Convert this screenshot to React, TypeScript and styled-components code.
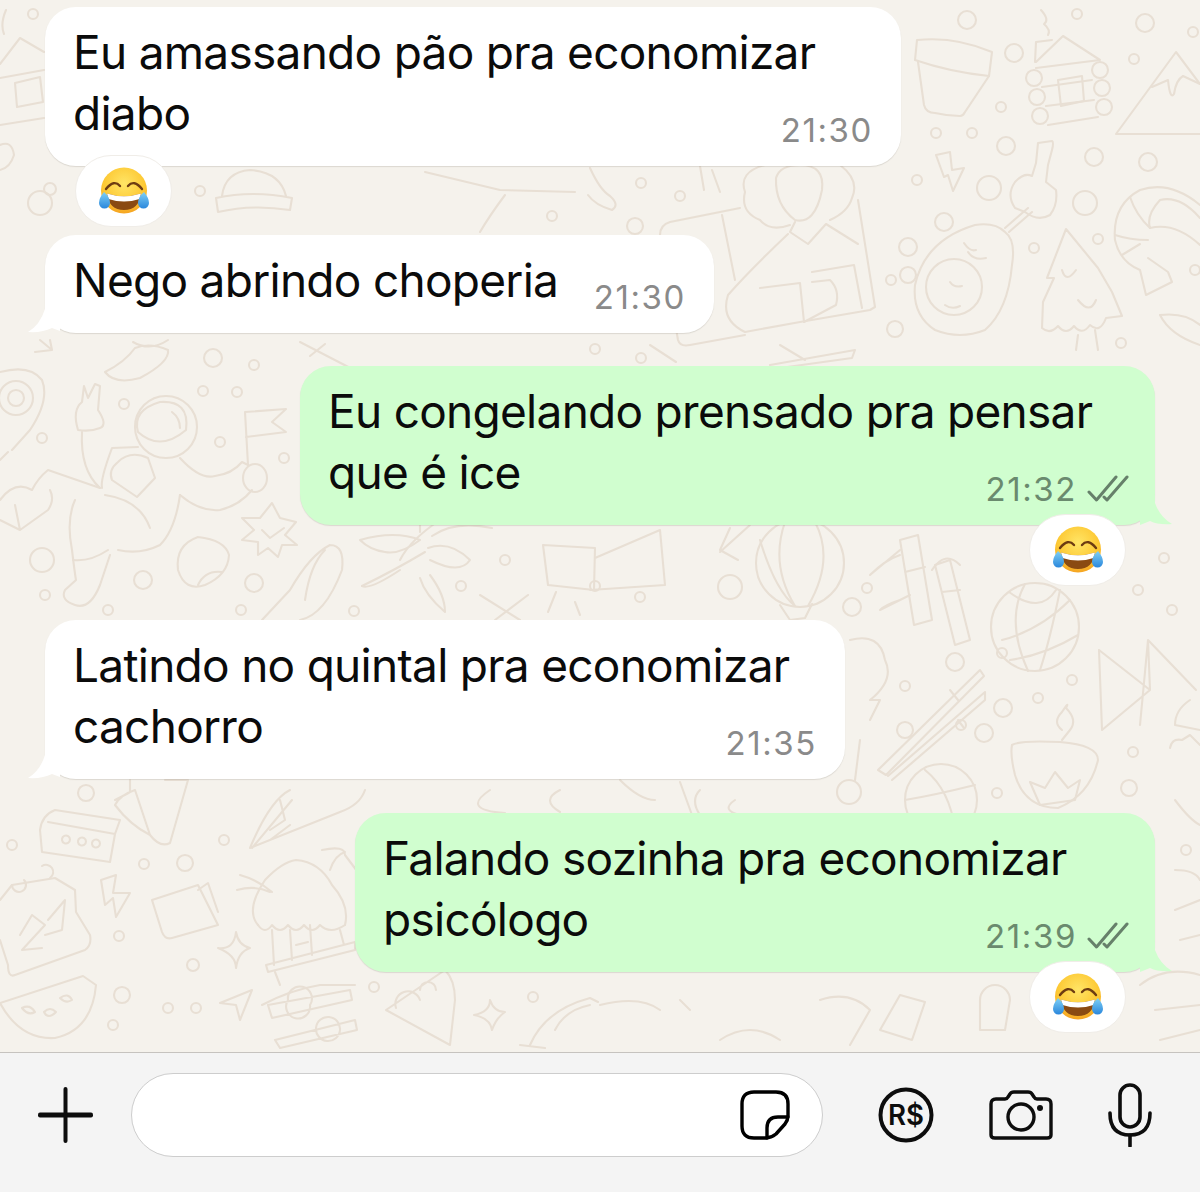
import React from 'react'
import styled, { createGlobalStyle } from 'styled-components'

const GlobalStyle = createGlobalStyle`
  html, body {
    margin: 0;
    padding: 0;
    background: #f4f4f4;
    font-family: Inter, 'Liberation Sans', sans-serif;
  }
`

const Page = styled.div`
  width: 1200px;
  height: 1192px;
  display: flex;
  flex-direction: column;
  overflow: hidden;
`

const Chat = styled.main`
  position: relative;
  height: 1052px;
  box-sizing: border-box;
  padding: 7px 45px 0;
  display: flex;
  flex-direction: column;
  background: #f5f2ec;
  overflow: hidden;
`

const DoodleLayer = styled.svg`
  position: absolute;
  inset: 0;
  fill: none;
  stroke: #e8dfd4;
  stroke-width: 2.1;
  stroke-linecap: round;
  stroke-linejoin: round;
`

const Group = styled.section<{ $out?: boolean; $after: number }>`
  position: relative;
  display: flex;
  flex-direction: column;
  align-items: ${({ $out }) => ($out ? 'flex-end' : 'flex-start')};
  margin-bottom: ${({ $after }) => $after}px;
`

const Bubble = styled.div<{ $out?: boolean; $width: number }>`
  position: relative;
  width: ${({ $width }) => $width}px;
  box-sizing: border-box;
  padding: 14.5px 30px 22.5px 28px;
  display: grid;
  border-radius: 31px;
  background: ${({ $out }) => ($out ? '#d0fecf' : '#ffffff')};
  box-shadow: 0 1px 1px rgba(90, 80, 70, 0.16);
`

const Message = styled.p`
  grid-area: 1 / 1;
  margin: 0;
  font-size: 46px;
  line-height: 61px;
  letter-spacing: -0.72px;
  color: #0b0b0b;
  white-space: nowrap;
`

const Meta = styled.div<{ $out?: boolean }>`
  grid-area: 1 / 1;
  justify-self: end;
  align-self: end;
  display: flex;
  align-items: center;
  gap: 10px;
  height: 32px;
  margin-bottom: -2px;
  margin-right: ${({ $out }) => ($out ? '-4px' : '-2px')};
  font-size: 33px;
  letter-spacing: 1.6px;
  color: ${({ $out }) => ($out ? '#6a8a6e' : '#8a8a8a')};
`

const Tail = styled.svg<{ $out?: boolean }>`
  position: absolute;
  bottom: 0;
  ${({ $out }) => ($out ? 'right: -17px;' : 'left: -17px;')}
  fill: ${({ $out }) => ($out ? '#d0fecf' : '#ffffff')};
`

const Reaction = styled.div<{ $out?: boolean }>`
  position: relative;
  width: 97px;
  height: 72px;
  box-sizing: border-box;
  margin-top: -11px;
  ${({ $out }) => ($out ? 'margin-right: 29px;' : 'margin-left: 30px;')}
  display: flex;
  align-items: center;
  justify-content: center;
  border-radius: 36px;
  background: #ffffff;
  border: 1px solid #f0ede8;
`

const Footer = styled.footer`
  flex: 1;
  box-sizing: border-box;
  padding: 20px 48px 0 38px;
  border-top: 1px solid #c6c3bf;
  background: #f4f4f4;
  display: flex;
  align-items: flex-start;
`

const ToolSlot = styled.div<{ $before?: number }>`
  height: 84px;
  display: flex;
  align-items: center;
  margin-left: ${({ $before }) => $before ?? 0}px;
  color: #0d0d0d;
`

const InputBox = styled.div`
  width: 692px;
  height: 84px;
  box-sizing: border-box;
  margin-left: 38px;
  padding-right: 32px;
  display: flex;
  align-items: center;
  justify-content: flex-end;
  border: 1px solid #cdcdcd;
  border-radius: 42px;
  background: #ffffff;
`

const CIRCLES: [number, number, number][] = [
  [967, 20, 9], [1077, 14, 5], [1145, 23, 9], [1193, 32, 5], [1014, 53, 9], [1134, 59, 5],
  [1001, 107, 5], [936, 133, 5], [972, 133, 5], [1006, 146, 9], [1094, 157, 9], [1148, 162, 9],
  [917, 180, 5], [989, 188, 12], [1085, 203, 12], [944, 222, 9], [1034, 248, 5], [1098, 239, 5],
  [908, 247, 9], [1121, 343, 5], [1195, 270, 5], [33, 14, 5],
  [1034, 78, 8], [1100, 70, 8], [1037, 97, 8], [1102, 88, 8], [1040, 116, 8], [1104, 107, 8],
  [50, 189, 6], [200, 191, 5], [40, 203, 12], [641, 183, 5], [680, 196, 5], [552, 216, 5],
  [635, 226, 8], [908, 275, 8], [891, 280, 5], [895, 329, 8], [595, 349, 5], [641, 358, 5],
  [213, 358, 9], [254, 365, 5], [203, 391, 5], [237, 392, 5], [124, 404, 5], [42, 438, 5],
  [220, 442, 5], [284, 458, 5], [42, 560, 12], [143, 580, 9], [254, 583, 9], [45, 595, 5],
  [108, 610, 5], [241, 610, 5], [354, 611, 5], [505, 560, 5], [461, 586, 5], [595, 586, 5],
  [640, 597, 5], [730, 587, 12], [852, 607, 9], [867, 588, 5], [1164, 558, 5], [1138, 590, 5],
  [1105, 525, 8], [1172, 610, 5], [905, 730, 8], [955, 662, 9], [905, 686, 5], [1002, 653, 5],
  [1072, 680, 5], [1038, 698, 5], [1003, 708, 9], [961, 725, 5], [984, 733, 9], [1133, 752, 5],
  [997, 793, 5], [1129, 788, 8], [849, 792, 12], [12, 845, 5], [86, 793, 8],
  [224, 840, 5], [144, 864, 5], [185, 863, 8], [119, 936, 5], [193, 965, 6], [122, 995, 8],
  [168, 1008, 5], [196, 1008, 5], [113, 1025, 5], [374, 987, 5], [533, 997, 5], [1090, 870, 9],
  [1000, 850, 5], [1186, 850, 5],
]

const PATHS: string[] = [
  // cabin cut by the left edge
  'M0 64 L20 38 L44 52 M0 78 L44 70 M0 125 L44 118 M15 83 L40 77 L43 102 L17 107 Z',
  'M6 10 Q0 24 4 34 M0 145 Q12 140 14 155 Q10 168 0 170',
  // pot, cabin, mountain (top right)
  'M917 40 Q955 36 992 52 L989 76 Q950 72 915 60 Z',
  'M918 62 L924 105 Q926 113 935 113 Q948 116 960 116 Q963 116 965 112 L989 76',
  'M1036 62 L1063 36 L1100 60 L1036 68 M1035 62 L1036 42 L1052 40',
  'M1041 10 Q1050 20 1044 24 Q1051 30 1048 35',
  'M1042 87 L1092 80 M1046 106 L1094 100 M1048 125 L1098 117',
  'M1058 80 L1082 76 L1084 101 L1061 106 Z',
  'M1116 134 L1176 52 L1200 84 M1116 134 L1200 134',
  'M1152 87 L1168 80 Q1170 100 1174 94 Q1176 80 1183 76 L1200 84',
  // lightning, key, avocado, tree, shrimp
  'M936 155 L950 152 L952 170 L964 168 L953 191 L948 175 L944 177 Z',
  'M1038 143 L1052 141 Q1054 142 1052 150 L1048 165 L1046 182 L1056 190 Q1058 205 1050 215 Q1038 222 1025 212 L1015 208 Q1006 195 1015 182 Q1024 172 1032 176 L1036 163 Z',
  'M1028 208 L1005 228 M1032 212 L1009 232',
  'M1005 232 Q1016 240 1012 265 Q1008 310 985 330 Q960 340 935 330 Q912 315 915 285 Q925 240 975 225 Q995 222 1005 232',
  'M982 287 A28 28 0 1 1 926 287 A28 28 0 1 1 982 287',
  'M964 243 Q970 252 976 250 M968 252 Q974 261 986 258 M950 282 Q954 288 962 286 M945 305 Q952 310 960 306',
  'M1066 229 L1047 278 L1054 278 L1043 302 L1042 328 Q1050 335 1058 326 Q1066 336 1074 326 Q1082 336 1090 325 Q1100 334 1106 318 L1122 316 L1112 292 L1098 268 Z',
  'M1078 335 L1076 350 M1095 330 L1098 350 M1076 270 Q1066 284 1062 270 M1078 300 Q1090 315 1096 300',
  'M1200 205 Q1170 180 1140 190 Q1112 205 1115 240 Q1120 262 1140 270 L1146 295 L1172 282 L1168 272 L1148 258',
  'M1200 218 Q1180 195 1160 200 Q1146 215 1150 228 Q1175 222 1200 245',
  'M1130 197 Q1136 215 1150 228 M1115 235 Q1130 240 1148 240 M1122 255 L1140 244',
  'M1160 315 Q1185 312 1200 325 M1160 315 Q1170 335 1200 345',
  // woman with notebook
  'M765 165 Q738 172 745 192 Q740 212 760 220 Q770 232 790 225 M840 165 Q860 180 852 198 Q848 212 830 220',
  'M776 178 Q775 205 795 220 Q815 225 822 190 Q825 165 800 165 Q780 165 776 178',
  'M795 222 L790 232 L808 244 L826 224 L858 244',
  'M788 234 Q750 270 728 295 Q720 320 745 332 L800 322 L870 310 L875 307 L858 200',
  'M740 208 L670 222 Q660 225 660 235 L678 340 Q680 347 690 345 L745 335',
  'M722 215 L735 280 M760 288 L800 283 L804 322 M812 272 L854 265 L862 308',
  'M812 282 L830 280 Q840 290 836 305 L804 322',
  'M650 345 L676 362 M780 345 L805 360 M770 365 L855 350 L852 358 L780 368',
  // hat and misc under first bubble
  'M222 196 Q225 172 250 170 Q280 172 286 196 M216 198 Q252 190 292 198 L290 210 Q252 204 218 212 Z',
  'M425 172 L500 190 L575 192 M505 195 Q490 215 480 232 M590 168 Q600 190 610 196 Q620 205 612 210 Q595 205 588 195',
  'M700 166 L704 190 M712 170 L720 192',
  // left edge, below bubble 2
  'M40 340 L52 350 M35 352 L52 350 L50 340',
  'M105 372 Q125 362 135 348 Q150 342 168 350 Q170 362 140 378 Q115 385 105 372',
  'M133 342 Q150 352 168 340',
  'M300 342 L358 372 M310 356 L325 344',
  // astronaut
  'M197 427 A31 31 0 1 1 135 427 A31 31 0 1 1 197 427',
  'M138 432 Q160 452 186 430 Q190 400 160 402 Q132 410 138 432',
  'M172 412 Q180 418 180 428',
  'M138 447 L112 448 Q100 480 102 488 M82 432 Q80 470 100 488',
  'M78 430 Q72 410 82 402 L84 386 L88 398 L95 384 L100 386 L98 410 Q108 425 100 428 Q90 432 78 430',
  'M148 458 Q130 450 118 462 Q108 470 112 480 L137 497 L155 478 Z',
  'M180 458 Q200 480 215 476 Q232 474 242 462 L248 465 M180 495 Q200 512 220 510 Q240 505 252 490',
  'M180 495 Q175 530 160 545 Q140 555 118 550 M105 495 Q140 500 150 528',
  'M75 500 Q66 520 72 550 Q75 575 76 580 L65 590 Q60 600 75 605 Q90 610 100 585 L110 555',
  'M73 560 Q90 562 108 550 M100 488 L48 470 Q38 478 32 490 Q15 480 0 500 M50 490 Q55 500 48 510 L20 530 M0 520 L20 530 L15 505',
  'M245 412 L286 409 L272 422 L286 432 L246 437 M245 412 L248 465',
  'M267 478 A12 14 0 1 1 243 478 A12 14 0 1 1 267 478',
  // rocket disc left
  'M0 372 Q30 364 42 380 Q50 400 30 430 L12 450 M0 460 L8 452',
  'M33 398 A17 17 0 1 1 -1 398 A17 17 0 1 1 33 398 M24 398 A8 8 0 1 1 8 398 A8 8 0 1 1 24 398',
  // star, blob, surfboard, leaves, flower
  'M272 503 L280 518 L296 522 L285 535 L297 545 L282 545 L278 557 L268 548 L258 555 L258 542 L242 540 L254 530 L242 518 L260 518 Z',
  'M262 530 L270 538 L284 528',
  'M198 537 Q225 540 229 555 Q228 575 205 585 Q185 592 178 570 Q175 545 198 537 M198 585 Q205 570 222 572',
  'M330 545 Q345 545 342 570 Q325 615 300 620 M330 545 Q310 555 290 590 L262 620 M325 550 Q310 565 305 600',
  'M360 540 Q395 530 420 540 Q400 555 385 552 Q370 550 360 540 M362 586 Q395 570 425 552',
  'M400 560 Q410 540 440 520 M430 560 Q460 575 470 560 Q450 540 428 548 M430 575 Q445 595 445 612 Q425 595 420 578 M400 570 Q370 590 362 586',
  'M432 536 Q455 520 492 528 M420 532 L420 520',
  // box and pieces in the middle
  'M543 545 L595 548 L594 590 L548 585 Z M595 558 L660 530 L665 585 L590 590',
  'M480 595 L520 620 M495 620 L528 595 M548 612 L556 592 M575 602 L580 615',
  'M730 528 L720 550 L738 560 M750 525 L720 552',
  // beach ball
  'M844 563 A44 44 0 1 1 756 563 A44 44 0 1 1 844 563',
  'M785 522 Q770 565 795 606 M815 522 Q835 560 808 606 M760 540 Q775 590 795 606',
  'M780 605 L790 620 L805 618 L812 604',
  // bamboo
  'M900 540 L918 535 L932 620 L914 625 Z M905 572 L925 567',
  'M935 565 L950 560 L970 640 L955 645 Z M942 592 L960 590',
  'M900 555 Q885 560 870 575 L900 550 M932 570 Q945 550 960 565 M900 600 Q885 605 880 610 L910 595',
  // globe
  'M1079 627 A44 44 0 1 1 991 627 A44 44 0 1 1 1079 627',
  'M1009 592 Q1040 615 1056 590 M1002 640 Q1040 630 1070 600 M1010 660 Q1045 655 1078 635 M1025 584 Q1005 620 1028 671 M1060 590 Q1050 640 1040 670',
  // planet triangle, chopsticks, lamp
  'M1099 650 L1102 730 L1150 690 L1099 650 M1150 690 L1148 640 L1196 690 M1148 640 L1140 725',
  'M1190 700 Q1175 710 1175 725 L1200 730',
  'M878 770 L980 670 L984 676 L886 775 Z M950 690 L958 700 M888 776 L985 692 L985 700 L892 780 M958 720 L964 728',
  'M1012 745 Q1020 740 1060 742 Q1098 745 1098 760 Q1090 795 1058 808 Q1025 808 1015 775 Q1010 755 1012 745',
  'M1062 730 Q1052 722 1062 712 Q1070 700 1066 708 Q1078 720 1070 730 L1062 740',
  'M1030 782 L1045 788 L1055 772 L1068 788 L1080 780 L1075 800 L1040 805 Z',
  'M1170 748 Q1172 738 1182 740 L1190 735 L1200 745 M1175 800 Q1190 820 1200 825',
  // basketball under the lamp
  'M977 800 A36 36 0 1 0 905 800 A36 36 0 1 0 977 800 M925 770 Q950 790 955 830 M905 800 Q935 795 975 785',
  // leftover right bubble area
  'M850 640 Q880 632 885 660 Q895 680 870 700 L880 700 L870 720 M860 740 L855 780',
  'M620 780 Q640 800 655 800 M680 782 L692 815 M700 790 Q690 800 700 815 M735 800 Q720 810 740 815',
  'M490 790 Q460 810 505 813 M560 790 Q540 800 560 812',
  // bottom left
  'M48 822 L115 834 L120 820 L55 810 Q42 815 40 830 L42 852 L110 862 L115 834',
  'M62 840 A4 4 0 1 0 62 839 M78 842 A4 4 0 1 0 78 841 M92 844 A4 4 0 1 0 92 843',
  'M115 800 Q125 795 130 792 L130 780 M165 780 L188 780 L170 843 Q160 848 150 835 L135 790 Q120 795 115 805 Q130 825 150 835',
  'M252 848 L292 800 M290 790 Q270 800 250 848 L340 812 Q360 805 365 790 M280 800 L285 820 L270 830 M290 825 L270 840',
  'M0 900 L12 885 L55 878 L75 890 L76 912 L90 935 Q92 945 85 950 L15 975 Q8 978 8 965 L0 940',
  'M12 885 A7 7 0 1 0 24 880 M50 878 A7 7 0 1 0 42 866',
  'M20 935 L32 915 L45 925 L22 950 L42 948 M48 920 L65 900 L62 930 L45 935',
  'M101 880 L116 875 L113 893 L130 893 L116 917 L113 898 L105 905 Z',
  'M152 900 L198 885 L218 925 L172 938 Q165 940 162 932 Z M198 890 L208 883 L218 912',
  'M237 890 Q255 885 270 892 M240 875 Q258 880 272 892',
  'M258 925 Q245 910 265 880 Q282 862 296 860 Q320 862 332 885 Q350 905 345 925',
  'M258 925 Q265 935 272 925 Q280 935 288 925 Q296 935 304 925 Q312 935 320 925 Q330 935 345 925',
  'M266 965 L355 942 L355 950 L268 972 Z M272 930 L274 965 M340 930 L344 945 M290 930 L292 960 M310 925 L312 955 M296 945 L308 942',
  'M275 972 L280 985 M262 1005 Q290 990 320 985 L355 985',
  'M322 850 Q345 845 345 855 L360 875 M330 870 Q335 855 345 852',
  'M236 932 Q234 950 218 948 Q236 955 236 968 Q238 952 250 948 Q238 945 236 932',
  'M0 1003 L83 976 L96 985 Q92 1030 55 1038 Q20 1040 0 1003',
  'M22 1008 Q28 1016 35 1012 Q30 1004 22 1008 M44 1012 Q48 1020 56 1012 Q50 1006 44 1012 M60 998 Q66 1004 72 1000 Q68 992 60 998',
  'M220 1003 L252 990 L240 1020 L236 1005 Z',
  'M268 1005 L350 990 L352 1000 L272 1018 Z M310 1005 A12 12 0 1 0 288 1000 A12 12 0 1 0 310 1005',
  'M275 1040 L355 1020 L357 1030 L280 1048 Z M340 1030 A12 12 0 1 0 316 1028 A12 12 0 1 0 340 1030',
  'M386 1010 L445 970 Q455 980 455 1000 L450 1045 Z M420 1000 A12 12 0 1 0 396 1008 M436 990 A8 8 0 1 0 420 990',
  'M490 1000 Q490 1012 474 1015 Q490 1018 492 1030 Q496 1018 505 1012 Q494 1012 490 1000',
  'M530 1045 Q545 1010 590 998 L598 1002 M555 1030 Q565 1010 590 1005 M520 1045 L545 1048',
  'M600 1005 Q640 995 660 1010 M680 1000 L690 1010 M720 1040 Q750 1020 780 1040 M820 1000 Q850 990 870 1010 L850 1045',
  'M900 995 L925 1002 L912 1040 L880 1030 Z M980 1000 A14 14 0 1 1 1010 1000 L1005 1030 L980 1030 Z',
  'M1155 1010 L1200 1005 M1160 1040 L1200 1030 M1140 985 Q1165 965 1200 975',
  'M1175 870 Q1195 870 1200 880 M1175 910 L1200 900 M1180 940 L1200 935',
]

const Doodles = () => (
  <DoodleLayer width={1200} height={1052} viewBox="0 0 1200 1052">
    {CIRCLES.map(([cx, cy, r]) => (
      <circle key={`${cx}-${cy}`} cx={cx} cy={cy} r={r} />
    ))}
    {PATHS.map(d => (
      <path key={d} d={d} />
    ))}
  </DoodleLayer>
)

const LaughEmoji = () => (
  <svg width="52" height="50" viewBox="0 0 52 50">
    <defs>
      <radialGradient id="face" cx="50%" cy="35%" r="70%">
        <stop offset="0%" stopColor="#ffe566" />
        <stop offset="65%" stopColor="#fdc833" />
        <stop offset="100%" stopColor="#f39a1d" />
      </radialGradient>
      <linearGradient id="tear" x1="0" y1="0" x2="0" y2="1">
        <stop offset="0%" stopColor="#7fd0f5" />
        <stop offset="100%" stopColor="#2a87dc" />
      </linearGradient>
    </defs>
    <circle cx="26" cy="24.5" r="23" fill="url(#face)" />
    <path d="M8 23 Q16 13 22 20" fill="none" stroke="#6d3c12" strokeWidth="2.4" strokeLinecap="round" />
    <path d="M30 20 Q36 13 44 23" fill="none" stroke="#6d3c12" strokeWidth="2.4" strokeLinecap="round" />
    <path d="M9 27.5 Q26 33 43 27.5 Q41 44 26 44 Q11 44 9 27.5 Z" fill="#8a4a12" />
    <path d="M9 27.5 Q26 33 43 27.5 L41.5 33 Q26 38 10.5 33 Z" fill="#ffffff" />
    <path d="M6 26 Q1 32 1 37 A5.5 5.5 0 0 0 12 37 Q12 31 6 26 Z" fill="url(#tear)" />
    <path d="M46 26 Q51 32 51 37 A5.5 5.5 0 0 1 40 37 Q40 31 46 26 Z" fill="url(#tear)" />
  </svg>
)

const DoubleCheck = () => (
  <svg width="42" height="28" viewBox="0 0 42 28" fill="none" stroke="#66806a" strokeWidth="3" strokeLinecap="round" strokeLinejoin="round">
    <path d="M2 17 L9.5 25 L29 2" />
    <path d="M17 22 L20 25 L40 2" />
  </svg>
)

const StickerIcon = () => (
  <svg width="50" height="50" viewBox="0 0 50 50" fill="none" stroke="currentColor" strokeWidth="3.4" strokeLinecap="round" strokeLinejoin="round">
    <path d="M14 2 H36 Q48 2 48 14 V26 Q48 30 45 34 L36 44 Q31 48 26 48 H14 Q2 48 2 36 V14 Q2 2 14 2 Z" />
    <path d="M48 27 H38 Q27 27 27 38 V48" />
  </svg>
)

const RealIcon = () => (
  <svg width="56" height="56" viewBox="0 0 56 56">
    <circle cx="28" cy="28" r="25.5" fill="none" stroke="currentColor" strokeWidth="4" />
    <text x="28" y="38" textAnchor="middle" fontFamily="Inter, sans-serif" fontWeight="600" fontSize="28" fill="currentColor" textLength="36" lengthAdjust="spacingAndGlyphs">
      R$
    </text>
  </svg>
)

const CameraIcon = () => (
  <svg width="64" height="50" viewBox="0 0 64 50" fill="none" stroke="currentColor" strokeWidth="3.4" strokeLinejoin="round">
    <path d="M7 9 H16 Q18 9 19 7 L21 4 Q22 2 25 2 H39 Q42 2 43 4 L45 7 Q46 9 48 9 H57 Q62 9 62 14 V45 Q62 48 58 48 H6 Q2 48 2 45 V14 Q2 9 7 9 Z" />
    <circle cx="32" cy="27" r="13" />
    <circle cx="51" cy="18" r="3" fill="currentColor" stroke="none" />
  </svg>
)

const MicIcon = () => (
  <svg width="44" height="64" viewBox="0 0 44 64" fill="none" stroke="currentColor" strokeWidth="3.6" strokeLinecap="round">
    <rect x="12" y="2" width="20" height="42" rx="10" />
    <path d="M2 30 Q2 52 22 52 Q42 52 42 30" />
    <path d="M22 52 V63" />
  </svg>
)

const PlusIcon = () => (
  <svg width="55" height="56" viewBox="0 0 55 56">
    <rect x="0" y="25.5" width="55" height="5" rx="2" fill="currentColor" />
    <rect x="25.5" y="0" width="4" height="56" rx="2" fill="currentColor" />
  </svg>
)

const InTail = () => (
  <Tail width="32" height="34" viewBox="0 0 32 34">
    <path d="M17 0 V10 Q12 26 0 33 Q14 34 24 29 L32 32 V0 Z" />
  </Tail>
)

const OutTail = () => (
  <Tail $out width="32" height="30" viewBox="0 0 32 30">
    <path d="M15 0 V8 Q20 22 32 29 Q18 30 10 26 L0 30 V0 Z" />
  </Tail>
)

const Time = ({ value, out }: { value: string; out?: boolean }) => (
  <Meta $out={out}>
    {value}
    {out && <DoubleCheck />}
  </Meta>
)

const App: React.FC = () => (
  <Page>
    <GlobalStyle />
    <Chat>
      <Doodles />
      <Group $after={8}>
        <Bubble $width={856}>
          <Message>
            Eu amassando pão pra economizar
            <br />
            diabo
          </Message>
          <Time value="21:30" />
        </Bubble>
        <Reaction>
          <LaughEmoji />
        </Reaction>
      </Group>
      <Group $after={33}>
        <Bubble $width={669}>
          <InTail />
          <Message>Nego abrindo choperia</Message>
          <Time value="21:30" />
        </Bubble>
      </Group>
      <Group $out $after={34}>
        <Bubble $out $width={855}>
          <OutTail />
          <Message>
            Eu congelando prensado pra pensar
            <br />
            que é ice
          </Message>
          <Time value="21:32" out />
        </Bubble>
        <Reaction $out>
          <LaughEmoji />
        </Reaction>
      </Group>
      <Group $after={34}>
        <Bubble $width={800}>
          <InTail />
          <Message>
            Latindo no quintal pra economizar
            <br />
            cachorro
          </Message>
          <Time value="21:35" />
        </Bubble>
      </Group>
      <Group $out $after={0}>
        <Bubble $out $width={800}>
          <OutTail />
          <Message>
            Falando sozinha pra economizar
            <br />
            psicólogo
          </Message>
          <Time value="21:39" out />
        </Bubble>
        <Reaction $out>
          <LaughEmoji />
        </Reaction>
      </Group>
    </Chat>
    <Footer>
      <ToolSlot>
        <PlusIcon />
      </ToolSlot>
      <InputBox>
        <StickerIcon />
      </InputBox>
      <ToolSlot $before={55}>
        <RealIcon />
      </ToolSlot>
      <ToolSlot $before={55}>
        <CameraIcon />
      </ToolSlot>
      <ToolSlot $before={55}>
        <MicIcon />
      </ToolSlot>
    </Footer>
  </Page>
)

export default App
